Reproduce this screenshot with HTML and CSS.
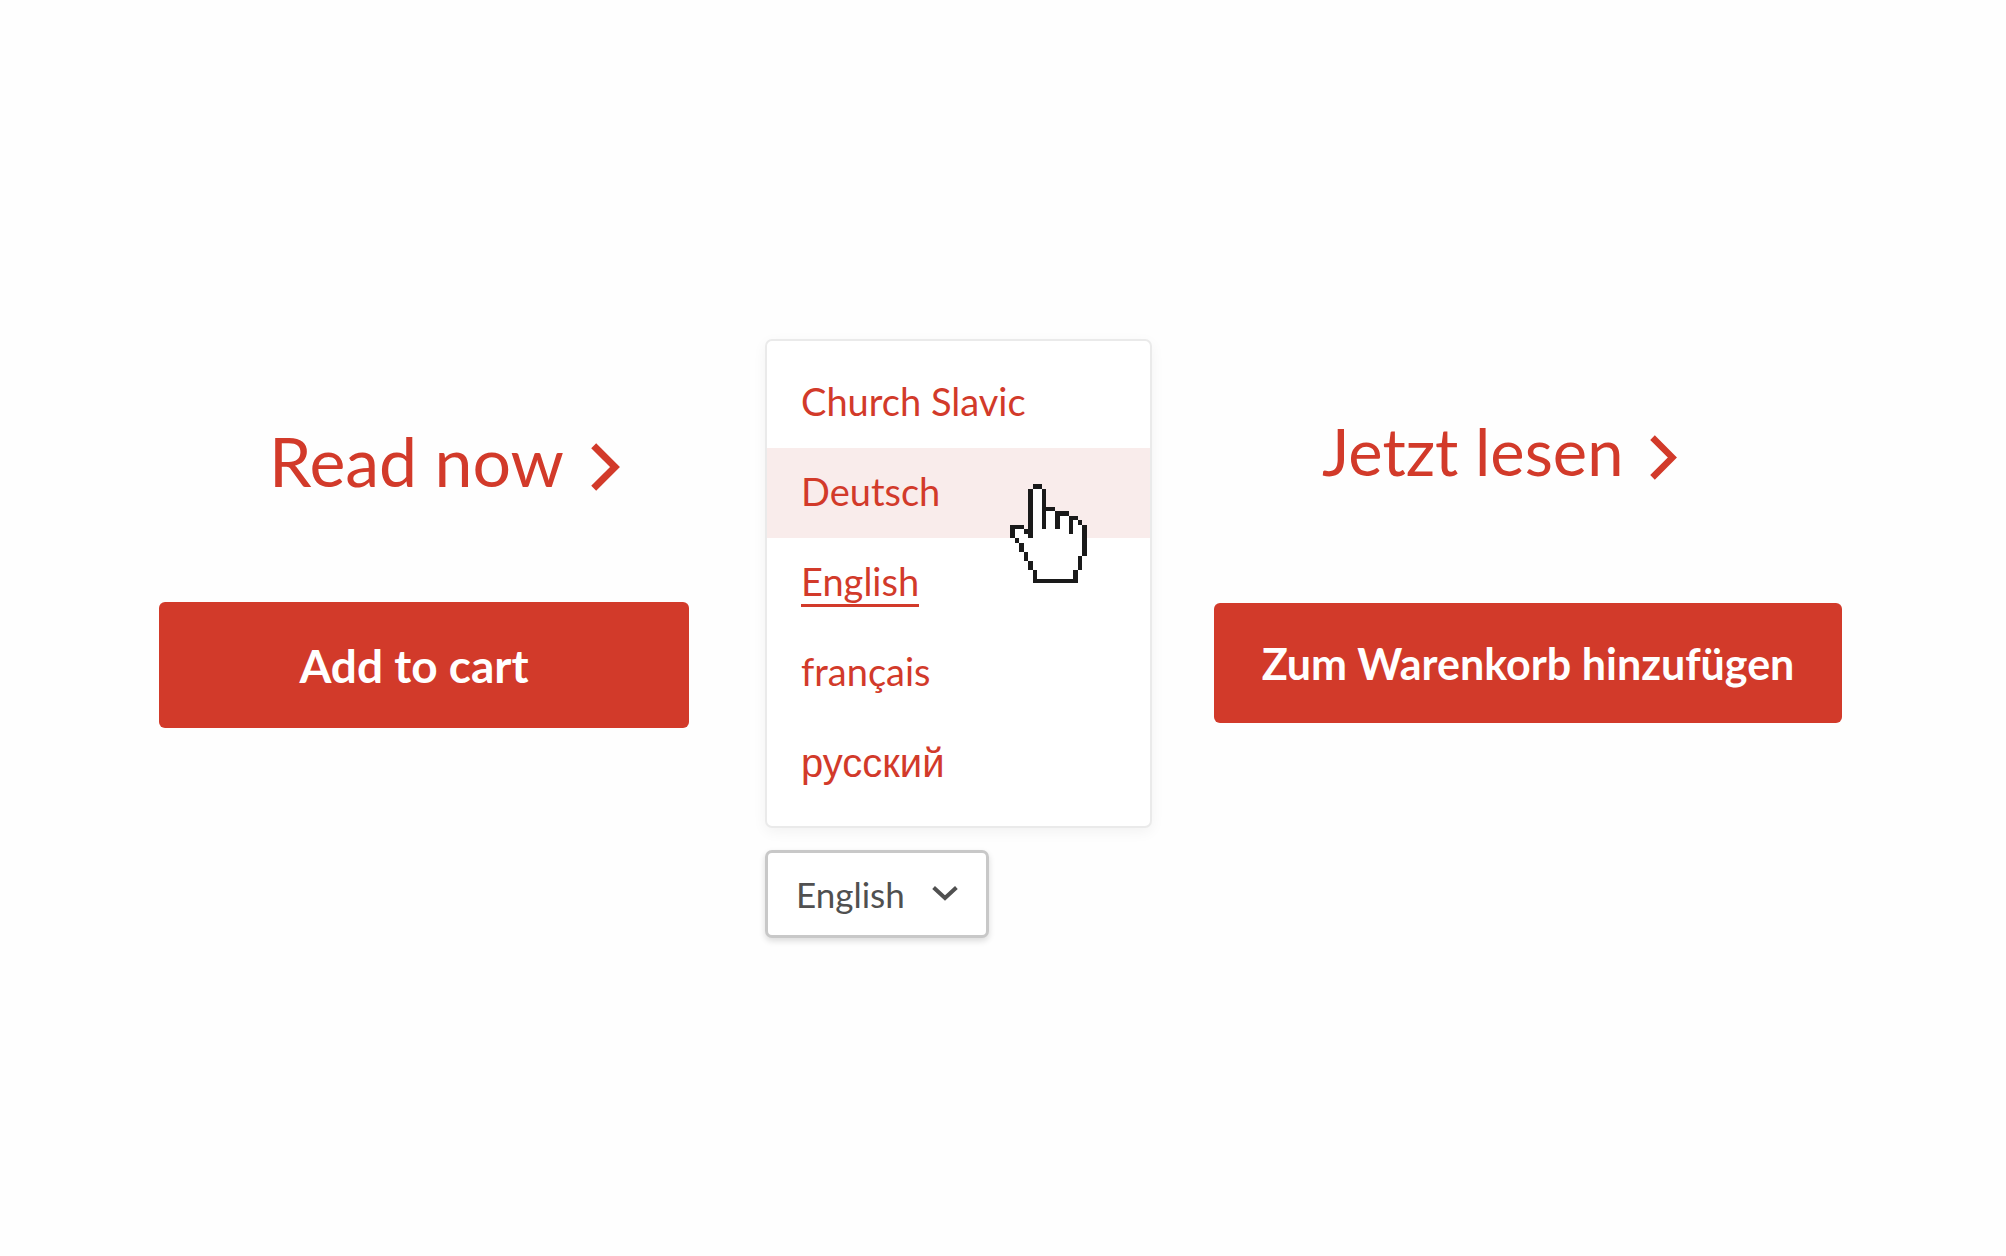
FILE: index.html
```html
<!DOCTYPE html>
<html lang="en">
<head>
    <meta charset="UTF-8">
    <meta name="viewport" content="width=device-width, initial-scale=1.0">
    <title>Language switcher</title>
    <link rel="stylesheet" href="styles.css">
</head>
<body>

    <main class="demo">
        <section class="panel panel--en">
            <a class="read-link" href="#">
                Read now
                <svg class="read-link--arrow" viewBox="0 0 29 48" aria-hidden="true"><path d="M2.7 2.7 L24 24 L2.7 45.3"/></svg>
            </a>
            <button class="cart-button" type="button">Add to cart</button>
        </section>

        <section class="language">
            <div class="menu">
                <ul class="menu--list">
                    <li><a class="menu--item" href="#" lang="cu">Church Slavic</a></li>
                    <li><a class="menu--item is-hovered" href="#" lang="de">Deutsch</a></li>
                    <li><a class="menu--item" href="#" aria-current="true"><span class="menu--current">English</span></a></li>
                    <li><a class="menu--item" href="#" lang="fr">français</a></li>
                    <li><a class="menu--item menu--item-cyrillic" href="#" lang="ru">русский</a></li>
                </ul>
                <!-- pixel hand, 17 x 22 cells -->
                <svg class="cursor" viewBox="0 0 17 22" shape-rendering="crispEdges" aria-hidden="true">
                    <path fill="#fff" d="M5 1H7V6H10V7H13V8H15V9H16V16H15V19H14V21H6V19H5V17H4V15H3V13H2V12H1V10H3V11H5Z"/>
                    <path fill="#1a1a1a" d="M5 0h2v1h-2zM4 1h1v11h-1zM7 1h1v9h-1zM8 5h2v1h-2zM10 6h3v1h-3zM10 7h1v3h-1zM13 7h2v1h-2zM13 8h1v3h-1zM15 8h1v1h-1zM16 9h1v7h-1zM15 16h1v3h-1zM14 19h1v3h-1zM5 21h9v1h-9zM5 19h1v2h-1zM4 17h1v2h-1zM3 15h1v2h-1zM2 13h1v2h-1zM1 12h1v1h-1zM0 9h1v3h-1zM1 9h2v1h-2zM3 10h1v1h-1z"/>
                </svg>
            </div>
            <button class="language--toggle" type="button" aria-haspopup="true" aria-expanded="true">
                English
                <svg class="language--caret" viewBox="0 0 26 16" aria-hidden="true"><path d="M1.6 1.6 L13 12 L24.4 1.6"/></svg>
            </button>
        </section>

        <section class="panel panel--de" lang="de">
            <a class="read-link" href="#">
                Jetzt lesen
                <svg class="read-link--arrow" viewBox="0 0 29 48" aria-hidden="true"><path d="M2.7 2.7 L24 24 L2.7 45.3"/></svg>
            </a>
            <button class="cart-button" type="button">Zum Warenkorb hinzufügen</button>
        </section>
    </main>

</body>
</html>
```
FILE: styles.css
```css
* {
    box-sizing: border-box;
}
body {
    margin: 0;
    font-family: 'Lato', 'Liberation Sans', sans-serif;
    background-color: #fefefe;
    color: #d23a2a;
}
a {
    color: inherit;
    text-decoration: none;
}
button {
    font-family: inherit;
    cursor: pointer;
}

.demo {
    display: grid;
    grid-template-columns: 530fr 401fr 628fr;
    column-gap: 62px;
    align-content: center;
    align-items: start;
    min-height: 100vh;
    padding: 20px 164px 0 159px;
}

.panel {
    display: flex;
    flex-direction: column;
}
.panel--en {
    gap: 100px;
    padding-top: 81px;
}
.panel--de {
    gap: 113px;
    padding-top: 73px;
}

.read-link {
    display: flex;
    align-items: center;
    gap: 27px;
    padding-left: 110px;
    font-size: 68px;
    line-height: 82px;
}
.panel--de .read-link {
    padding-left: 108px;
    font-size: 65px;
    line-height: 78px;
}
.read-link--arrow {
    width: 29px;
    height: 48px;
    margin-top: 13px;
    fill: none;
    stroke: currentColor;
    stroke-width: 7;
}
.panel--de .read-link--arrow {
    width: 27px;
    height: 45px;
}

.cart-button {
    height: 126px;
    padding: 2px 20px 0 0;
    border: 0;
    border-radius: 6px;
    background-color: #d23a2a;
    color: #ffffff;
    font-size: 46px;
    font-weight: 700;
}
.panel--de .cart-button {
    height: 120px;
    padding: 2px 0 0;
    font-size: 43px;
}

.language {
    display: flex;
    flex-direction: column;
    align-items: flex-start;
    gap: 22px;
    margin-left: 14px;
}
.menu {
    position: relative;
    width: 100%;
    padding: 17px 0 18px;
    border: 2px solid #eaeaea;
    border-radius: 7px;
    background-color: #ffffff;
    box-shadow: 0 4px 14px rgba(0, 0, 0, .05);
}
.menu--list {
    margin: 0;
    padding: 0;
    list-style: none;
}
.menu--item {
    display: block;
    padding: 0 34px 4px;
    font-size: 38px;
    line-height: 86px;
}
.menu--item.is-hovered {
    background-color: #f9eceb;
}
.menu--item-cyrillic {
    padding-bottom: 0;
    font-family: 'Liberation Sans', sans-serif;
    font-size: 40px;
    line-height: 90px;
}
.menu--current {
    border-bottom: 3px solid currentColor;
}

.cursor {
    position: absolute;
    top: 143px;
    left: 243px;
    width: 77px;
    height: 99px;
}

.language--toggle {
    display: flex;
    align-items: center;
    gap: 27px;
    height: 88px;
    padding: 0 28px;
    border: 3px solid #c8c8c8;
    border-radius: 7px;
    background-color: #ffffff;
    box-shadow: 0 3px 6px rgba(0, 0, 0, .14);
    color: #505050;
    font-size: 35px;
}
.language--caret {
    width: 26px;
    height: 16px;
    fill: none;
    stroke: currentColor;
    stroke-width: 4;
}
```
